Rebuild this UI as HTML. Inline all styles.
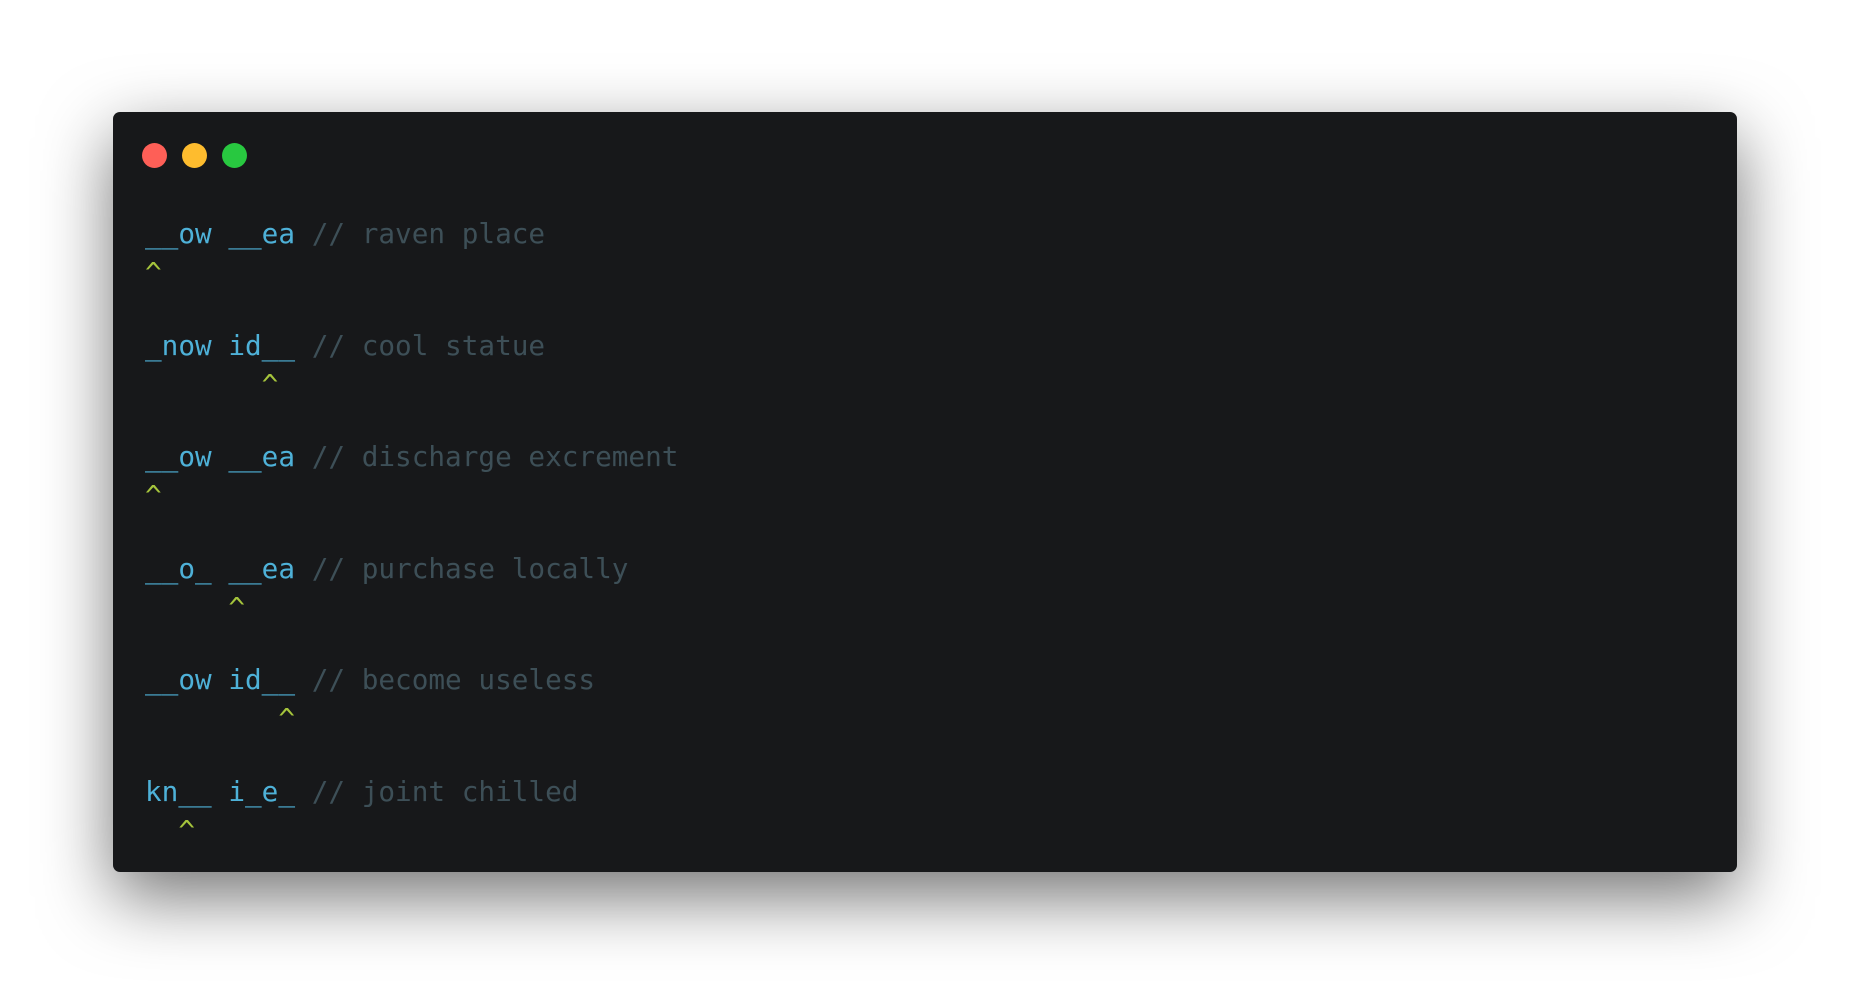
<!DOCTYPE html>
<html><head><style>
html,body{margin:0;padding:0;background:#fff;width:1850px;height:984px;overflow:hidden}
.win{position:absolute;left:113px;top:112px;width:1624px;height:760px;background:#17181a;border-radius:7px;box-shadow:0 25px 70px rgba(0,0,0,0.55)}
.d{position:absolute;top:143px;width:25px;height:25px;border-radius:50%}
.l{position:absolute;left:145px;font-family:"DejaVu Sans Mono","Liberation Mono",monospace;font-size:27.7px;line-height:28px;white-space:pre;color:#4eb1d8}
.c{color:#3d4f57}
.k{color:#a5c43c}
</style></head><body>
<div class="win"></div>
<div class="d" style="left:142px;background:#fe5f57"></div>
<div class="d" style="left:182px;background:#febc2e"></div>
<div class="d" style="left:222px;background:#28c840"></div>

<div class="l" style="top:220px">__ow __ea <span class="c">// raven place</span></div>
<div class="l k" style="top:259px">^</div>
<div class="l" style="top:332px">_now id__ <span class="c">// cool statue</span></div>
<div class="l k" style="top:371px">       ^</div>
<div class="l" style="top:443px">__ow __ea <span class="c">// discharge excrement</span></div>
<div class="l k" style="top:482px">^</div>
<div class="l" style="top:555px">__o_ __ea <span class="c">// purchase locally</span></div>
<div class="l k" style="top:594px">     ^</div>
<div class="l" style="top:666px">__ow id__ <span class="c">// become useless</span></div>
<div class="l k" style="top:705px">        ^</div>
<div class="l" style="top:778px">kn__ i_e_ <span class="c">// joint chilled</span></div>
<div class="l k" style="top:817px">  ^</div>
</body></html>
